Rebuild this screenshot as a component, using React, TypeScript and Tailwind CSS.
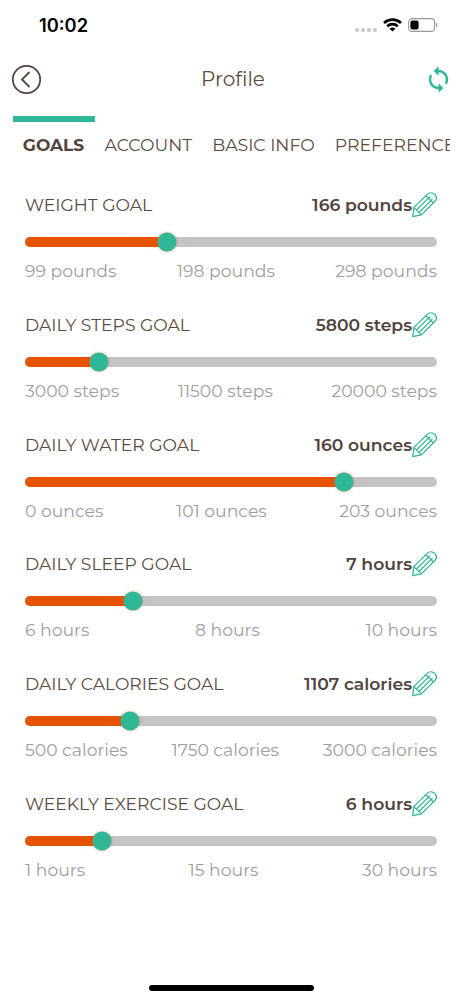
import { MdSync } from "react-icons/md";

interface Goal {
  title: string;
  value: string;
  thumb: number;
  marks: string[];
}

const TABS = ["GOALS", "ACCOUNT", "BASIC INFO", "PREFERENCES"];

// thumb is the centre of the knob, in px from the left end of the track
const GOALS: Goal[] = [
  { title: "WEIGHT GOAL", value: "166 pounds", thumb: 141.5, marks: ["99 pounds", "198 pounds", "298 pounds"] },
  { title: "DAILY STEPS GOAL", value: "5800 steps", thumb: 73.5, marks: ["3000 steps", "11500 steps", "20000 steps"] },
  { title: "DAILY WATER GOAL", value: "160 ounces", thumb: 319, marks: ["0 ounces", "101 ounces", "203 ounces"] },
  { title: "DAILY SLEEP GOAL", value: "7 hours", thumb: 107.5, marks: ["6 hours", "8 hours", "10 hours"] },
  { title: "DAILY CALORIES GOAL", value: "1107 calories", thumb: 104.5, marks: ["500 calories", "1750 calories", "3000 calories"] },
  { title: "WEEKLY EXERCISE GOAL", value: "6 hours", thumb: 76.5, marks: ["1 hours", "15 hours", "30 hours"] },
];

function StatusBar() {
  return (
    <div className="flex h-[50px] items-center pl-[39px] pr-6">
      <span className="font-['Inter',sans-serif] text-[18.3px] font-semibold leading-none text-black">10:02</span>
      <div className="ml-auto flex items-center">
        <div className="mt-[10px] mr-[6px] flex gap-[2px]">
          {[0, 1, 2, 3].map((i) => (
            <span key={i} className="size-[4px] rounded-[1.5px] bg-[#cbcbcb]" />
          ))}
        </div>
        <svg width="19" height="14" viewBox="0 0 19 14" fill="none" stroke="#000" strokeWidth="2.7" className="mr-[6px]">
          <path d="M1 4.9C5.8.4 13.2.4 18 4.9" />
          <path d="M4.2 8.3c3-2.8 7.6-2.8 10.6 0" />
          <path d="M9.5 13.5 6.6 10.7c1.6-1.5 4.2-1.5 5.8 0z" fill="#000" stroke="none" />
        </svg>
        <svg width="30" height="14" viewBox="0 0 30 14" fill="none">
          <rect x=".6" y=".6" width="26" height="12.8" rx="3.5" stroke="#999" strokeWidth="1.1" />
          <rect x="2.4" y="2.4" width="8.2" height="9.2" rx="2" fill="#000" />
          <path d="M28 4.8c1.8.6 1.8 3.8 0 4.4z" fill="#999" />
        </svg>
      </div>
    </div>
  );
}

function Pencil() {
  return (
    <svg width="25" height="26" viewBox="0 0 25 26" fill="none" stroke="#34b795" strokeWidth="1.3" strokeLinejoin="round">
      <path d="M.8 24.6 1.8 15.6 15.5 2.1c2-1.9 5-1.7 7.1.3s2.2 4.8.3 6.9L9.4 22.9z" />
      <path d="M1.8 15.6 9.4 22.9M4.4 18 18 4.6M7 20.5 20.5 7.1M13.9 3.7l7.4 7.2" />
    </svg>
  );
}

function GoalRow({ goal }: { goal: Goal }) {
  return (
    <section className="h-[119.75px]">
      <div className="flex h-[30px] items-center justify-between">
        <h2 className="text-[17.2px] font-normal text-[#5c4a42]">{goal.title}</h2>
        <div className="flex h-[26px] items-center">
          <span className="text-[17.2px] font-semibold text-[#51433d]">{goal.value}</span>
          <Pencil />
        </div>
      </div>
      <div className="relative mt-[17px] h-[10px] rounded-full bg-[#c4c4c4]">
        <div className="h-full rounded-l-full bg-[#e65300]" style={{ width: goal.thumb }} />
        <div
          className="absolute top-1/2 size-[19px] -translate-x-1/2 -translate-y-1/2 rounded-full bg-[#30b797] shadow-[0_0_3px_rgba(230,83,0,0.5)]"
          style={{ left: goal.thumb }}
        />
      </div>
      <div className="mt-[11px] -mr-px flex justify-between pr-px text-[17.25px] font-normal text-[#9e9e9e]">
        {goal.marks.map((mark) => (
          <span key={mark}>{mark}</span>
        ))}
      </div>
    </section>
  );
}

export default function App() {
  return (
    <div className="flex h-[1000px] w-[462px] flex-col overflow-hidden whitespace-nowrap bg-white font-['Montserrat','Inter',sans-serif]">
      <StatusBar />
      <header className="flex h-[58px] items-center justify-between pl-[11px] pr-[9px]">
        <svg width="31" height="31" viewBox="0 0 31 31" fill="none" stroke="#51433d" strokeWidth="1.8">
          <circle cx="15.5" cy="15.5" r="13.7" />
          <path d="m18 8.5-7 7 7 7" strokeLinecap="round" />
        </svg>
        <h1 className="text-[20px] font-normal text-[#5c4a42]">Profile</h1>
        <MdSync size={29} className="text-[#30b797]" />
      </header>
      <nav className="mx-[12.5px] mt-2 flex h-[42px] overflow-hidden">
        {TABS.map((tab, i) => (
          <div
            key={tab}
            className={
              i === 0
                ? "w-[82px] shrink-0 border-t-6 border-[#30b797] pt-[11px] text-center text-[17px] font-bold text-[#51433d]"
                : "shrink-0 border-t-6 border-transparent px-[10px] pt-[10px] text-[17.3px] font-normal text-[#5c4a42]"
            }
          >
            {tab}
          </div>
        ))}
      </nav>
      <main className="mt-[32px] flex-1 px-[25px]">
        {GOALS.map((goal) => (
          <GoalRow key={goal.title} goal={goal} />
        ))}
      </main>
      <div className="mx-auto mb-[9px] h-[6px] w-[165px] shrink-0 rounded-full bg-black" />
    </div>
  );
}
